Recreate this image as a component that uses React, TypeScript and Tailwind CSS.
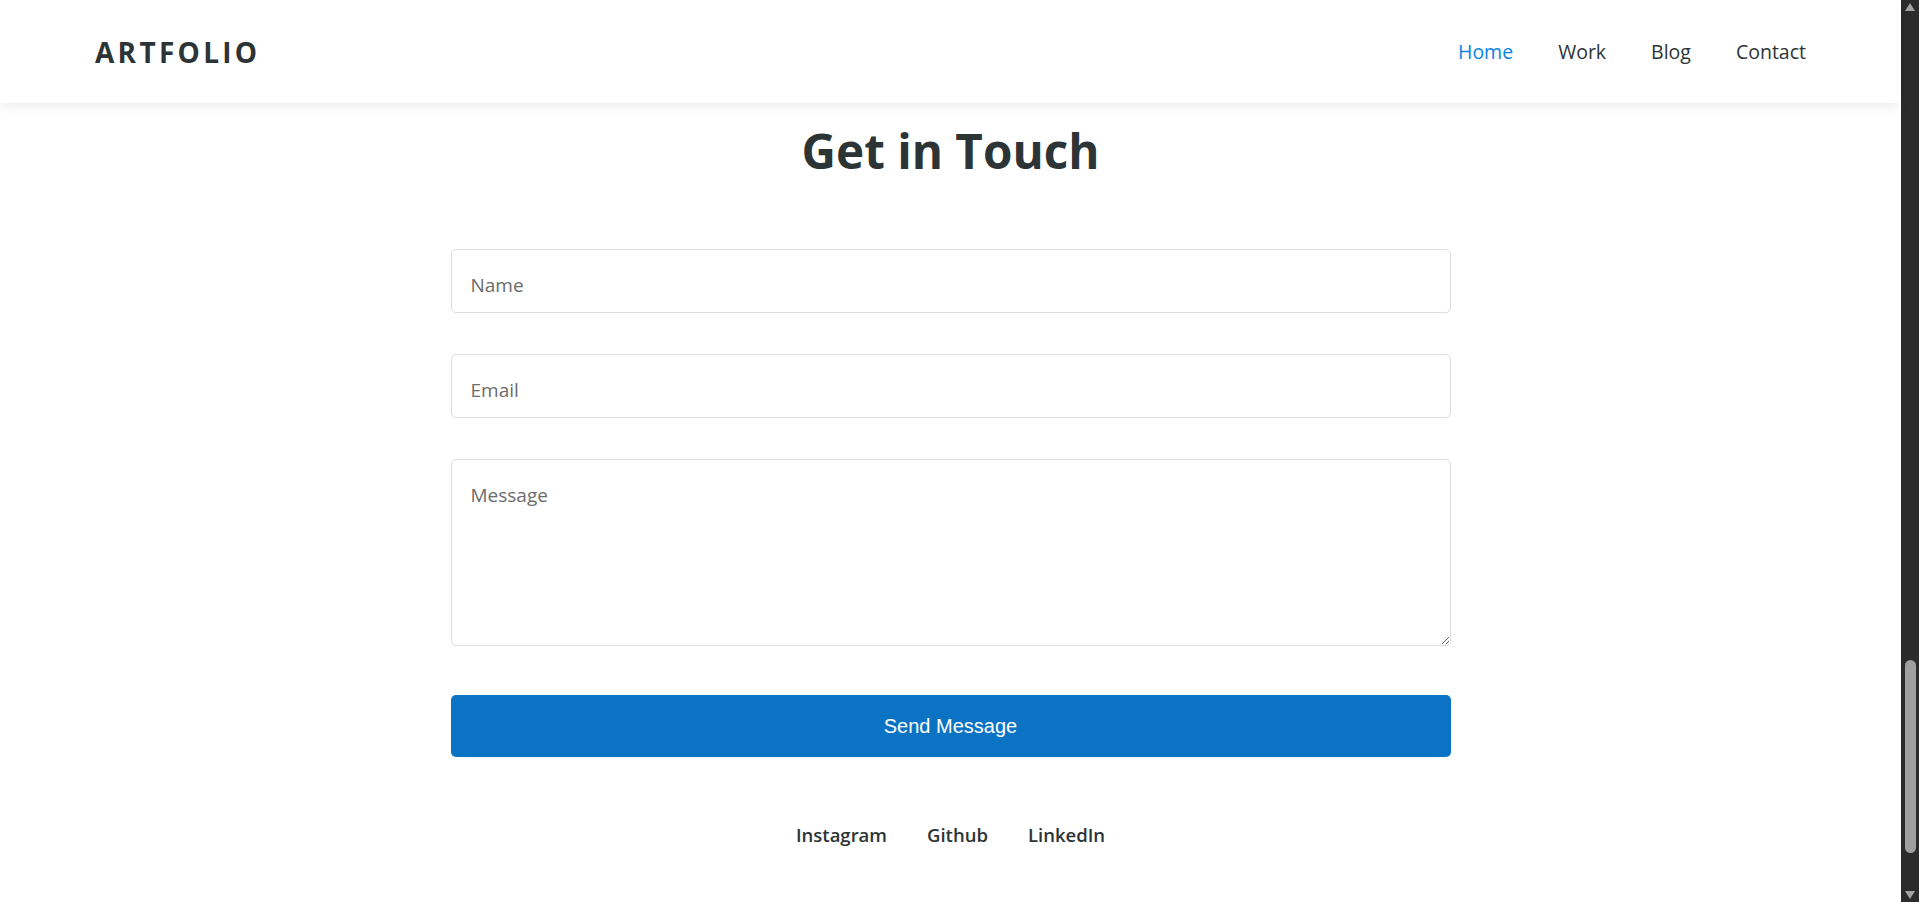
export default function App() {
  const font = { fontFamily: '"Open Sans", "Noto Sans", sans-serif' };
  return (
    <div className="flex h-screen w-full overflow-hidden bg-white text-[#2d3436]" style={font}>
      <div className="flex flex-1 flex-col">
        <header className="relative z-10 flex h-[103px] shrink-0 items-center justify-between bg-white px-[95px] shadow-[0_2px_12px_rgba(0,0,0,0.09)]">
          <div className="text-[28px] font-bold tracking-[3.3px]">ARTFOLIO</div>
          <nav className="flex gap-[45px] text-[19.5px] font-medium">
            <a className="text-[#0a84e0]">Home</a>
            <a>Work</a>
            <a>Blog</a>
            <a>Contact</a>
          </nav>
        </header>

        <main className="flex flex-col items-center">
          <h2 className="mt-[19px] text-[47.6px] font-bold leading-[1.2]">Get in Touch</h2>

          <form className="mt-[70px] flex w-[1000px] flex-col">
            <input
              placeholder="Name"
              className="mb-[41px] h-[64px] rounded-[5px] border border-[#dddddd] px-[19px] pt-[7px] text-[19px] placeholder:text-[#6b6b6b]"
            />
            <input
              placeholder="Email"
              className="mb-[41px] h-[64px] rounded-[5px] border border-[#dddddd] px-[19px] pt-[7px] text-[19px] placeholder:text-[#6b6b6b]"
            />
            <textarea
              placeholder="Message"
              className="h-[187px] rounded-[5px] border border-[#dddddd] px-[19px] pt-[23px] pb-[19px] text-[19px] leading-[1.3] placeholder:text-[#6b6b6b]"
            />
            <button
              type="button"
              className="mt-[49px] h-[62px] rounded-[5px] bg-[#0a73c4] text-[20px] text-white"
              style={{ fontFamily: '"Liberation Sans", Arial, sans-serif' }}
            >
              Send Message
            </button>
          </form>

          <div className="mt-[64px] flex gap-[40px] text-[18.5px] font-semibold">
            <a>Instagram</a>
            <a>Github</a>
            <a>LinkedIn</a>
          </div>
        </main>
      </div>

      {/* scrollbar */}
      <div className="flex w-[18px] shrink-0 flex-col items-center bg-[#2b2b2b]">
        <div className="mt-[3px] h-0 w-0 border-x-[5px] border-b-[8px] border-x-transparent border-b-[#a3a3a3]" />
        <div className="flex-1" />
        <div className="mb-[38px] h-[193px] w-[11px] rounded-full bg-[#9f9f9f]" />
        <div className="mb-[3px] h-0 w-0 border-x-[5px] border-t-[8px] border-x-transparent border-t-[#a3a3a3]" />
      </div>
    </div>
  );
}
